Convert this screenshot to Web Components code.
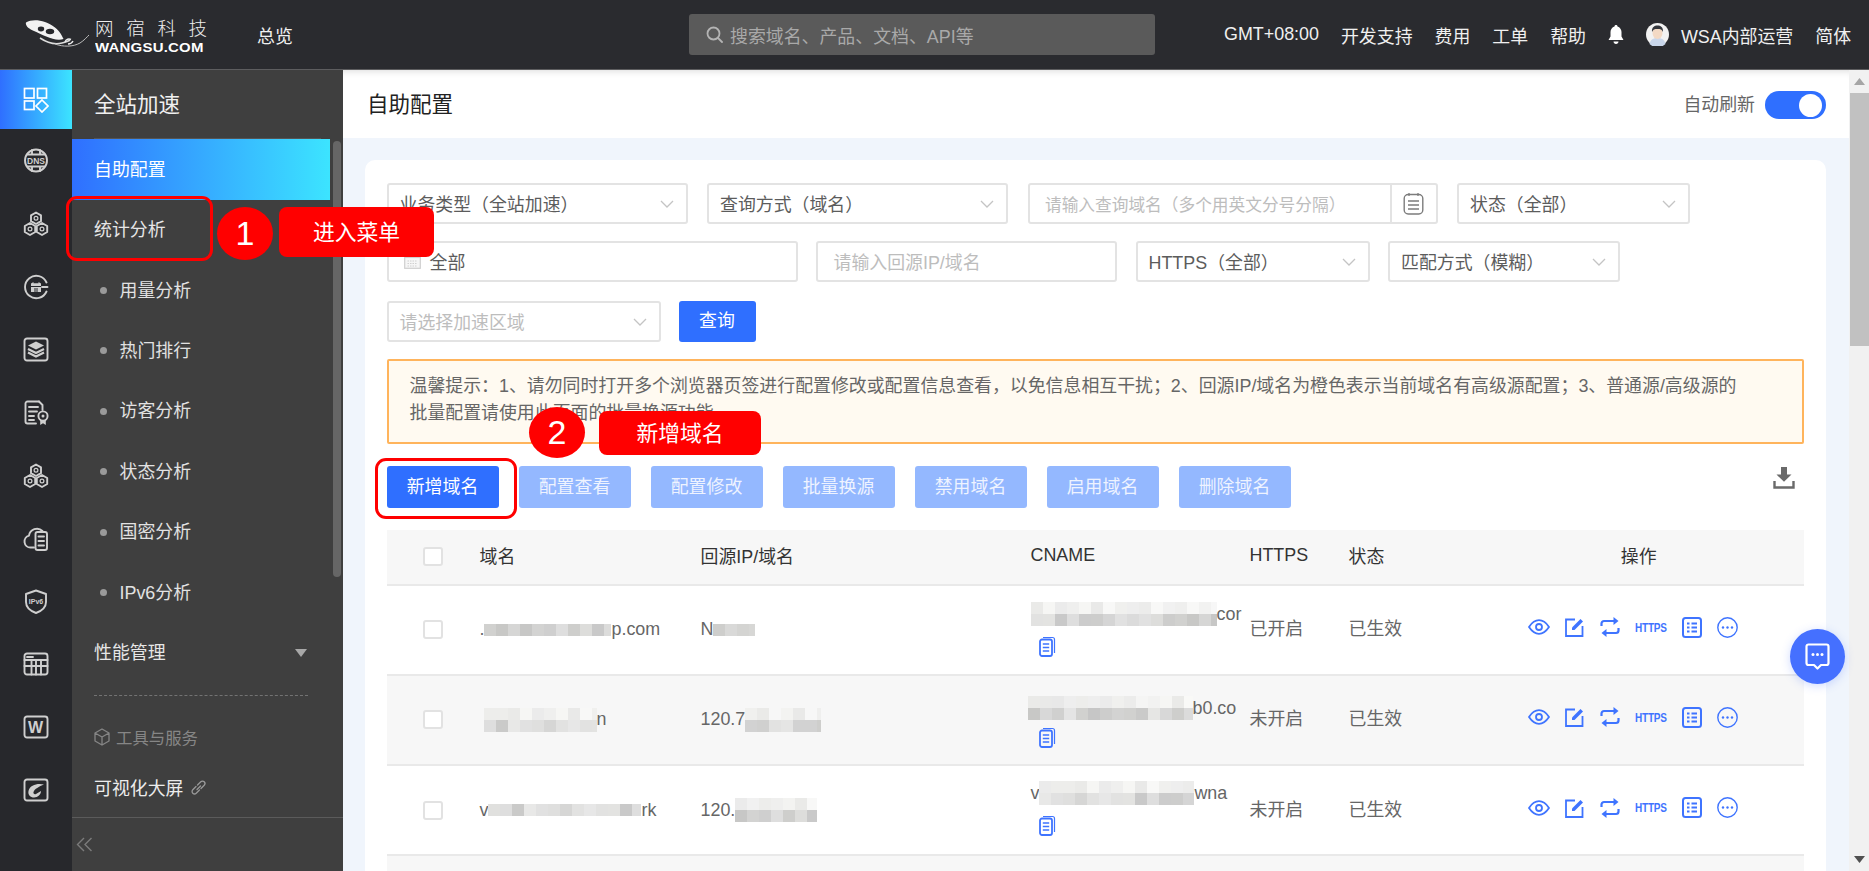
<!DOCTYPE html>
<html lang="zh-CN">
<head>
<meta charset="utf-8">
<title>自助配置</title>
<style>
html,body{margin:0;padding:0;height:100%;overflow:hidden;background:#fff}
body{font-family:"Liberation Sans","Noto Sans CJK SC",sans-serif;color:#555}
</style>
</head>
<body>
<ws-app></ws-app>
<script>
function reg(name, css, html, init){
  customElements.define(name, class extends HTMLElement{
    constructor(){
      super();
      const r = this.attachShadow({mode:'open'});
      r.innerHTML = `<style>${css}</style>` + (typeof html === 'function' ? html(this) : html);
      if(init) init(this, r);
    }
  });
}
const svg = (w,h,vb,body,extra='') => `<svg width="${w}" height="${h}" viewBox="${vb}" fill="none" ${extra}>${body}</svg>`;

/* ---------- rail icons ---------- */
const S = 'stroke="currentColor" stroke-width="1.9" stroke-linejoin="round" stroke-linecap="round"';
const hexCluster = `<g ${S} stroke-width="1.9">
  <path d="M13 1.500l5 2.900v5.800L13 13 8 10.200V4.400z"/>
  <path d="M7 12l5.200 3v6L7 24l-5.200-3v-6z"/>
  <path d="M19 12l5.200 3v6L19 24l-5.200-3v-6z"/></g>
  <circle cx="13" cy="7.300" r="1.900" stroke="currentColor" stroke-width="1.200"/><circle cx="7" cy="18" r="1.900" stroke="currentColor" stroke-width="1.200"/><circle cx="19" cy="18" r="1.900" stroke="currentColor" stroke-width="1.200"/>`;
const RAIL = {
  apps:`<g stroke="#fff" stroke-width="1.700"><rect x="1.500" y="1.500" width="9.500" height="9.500"/><rect x="14.500" y="1.500" width="9" height="9.500"/><rect x="1.500" y="14" width="9.500" height="8.500"/><path d="M19 13l6 6-6 6-6-6z"/></g>`,
  dns:`<circle cx="13" cy="12.500" r="11" ${S}/><path d="M5 6.500h16M5 18.500h16M9 2v4.500M17 2v4.500M9 18.500v4.500M17 18.500v4.500" ${S} stroke-width="1.400"/><text x="13" y="15.500" font-size="8.500" font-weight="700" text-anchor="middle" fill="currentColor" font-family="Liberation Sans">DNS</text>`,
  hex:hexCluster,
  edge:`<path d="M23.500 8.500A11.200 11.200 0 1 0 23.500 17.500" ${S}/><path d="M19 13h5.500" ${S}/><path d="M8 9.500l2.500-1.500v1.200h5V8L18 9.500V18H8z" fill="currentColor"/><path d="M8 12.500h10M11 15h4M11 17h4" stroke="#27282c" stroke-width="1.200"/>`,
  layers:`<rect x="1.500" y="1.500" width="23" height="22" rx="2.500" ${S}/><path d="M13 4.500l8 4-8 4-8-4z" fill="currentColor"/><path d="M5 12l8 4 8-4M5 15.500l8 4 8-4" stroke="currentColor" stroke-width="2.200"/>`,
  cert:`<path d="M16 1.500H4.500a2 2 0 0 0-2 2v18a2 2 0 0 0 2 2H13" ${S}/><path d="M16 1.500l3.500 3.500V10" ${S}/><path d="M6 7h9M6 11.500h8M6 16h5M6 20h5" ${S} stroke-width="1.600"/><circle cx="20" cy="16" r="4.600" ${S} stroke-width="1.600"/><circle cx="20" cy="16" r="1.500" fill="currentColor"/><path d="M17.200 20v5l2.800-1.800 2.800 1.800v-5" fill="currentColor"/>`,
  cloud:`<path d="M11 21.500H7.500a6 6 0 0 1-1.500-11.800A8 8 0 0 1 19.500 5" ${S}/><rect x="12.500" y="6" width="11.500" height="18" rx="2" ${S}/><path d="M15.500 10.500h5.500M15.500 15h5.500M15.500 19.500h5.500" ${S} stroke-width="2.200"/>`,
  shield:`<path d="M13 1.500l10 3.500v8c0 5.500-4.500 9-10 11-5.500-2-10-5.500-10-11V5z" ${S}/><text x="13" y="14.500" font-size="7" font-weight="700" text-anchor="middle" fill="currentColor" font-family="Liberation Sans">IPv6</text>`,
  table:`<rect x="1.500" y="1.500" width="23" height="21" rx="2.500" ${S}/><path d="M1.500 8h23M1.500 14h23M8.500 8v14.500M13 8v14.500M18 8v14.500" ${S} stroke-width="1.700"/><path d="M4 5h6" ${S} stroke-width="1.500"/>`,
  w:`<rect x="1.500" y="1.500" width="23" height="21" rx="2.500" ${S}/><text x="12.500" y="18" font-size="16" font-weight="700" text-anchor="middle" fill="currentColor" font-family="Liberation Sans">W</text>`,
  gauge:`<rect x="1.500" y="1.500" width="23" height="21" rx="2.500" ${S}/><path d="M21 6.500C15 5 7 6.500 5.500 13c-.8 4 2 6.500 5.500 6.500 4 0 7-3 7-6.500l-5 3c-1.500.8-3-.3-2.500-2C11.500 11 16 8.500 21 6.500z" fill="currentColor"/>`
};
reg('rail-icon', `:host{display:flex;align-items:center;justify-content:center;height:63.100px;color:#cfcfcf}
  :host([active]){height:59px;background:linear-gradient(90deg,#2f6fff,#3ce4ff)}
  svg{display:block}`,
  h => svg(26,26,'0 0 26 26',RAIL[h.getAttribute('name')]));

reg('icon-rail', `:host{display:block;width:72px;flex:none;background:#27282c}`,
  ['apps','dns','hex','edge','layers','cert','hex','cloud','shield','table','w','gauge']
   .map((k,i)=>`<rail-icon name="${k}" ${i===0?'active':''}></rail-icon>`).join(''));

/* ---------- top bar ---------- */
reg('ws-logo', `:host{display:flex;align-items:center;gap:5px;color:#fff;margin-left:25px;width:232px;flex:none}
  .t{display:flex;flex-direction:column;align-items:flex-start;line-height:1}
  .cn{font:300 18.500px "Noto Sans CJK SC",sans-serif;letter-spacing:12.700px;height:24px;line-height:24px;color:#eee;white-space:nowrap}
  .en{font:700 13px "Liberation Sans",sans-serif;letter-spacing:.2px;margin-top:1px;transform:scaleX(1.150);transform-origin:left;white-space:nowrap}`,
  svg(65,32,'0 0 65 32',`<path d="M1 3.500C8 -.5 20 1 30 8.500c5 3.800 7 8.500 8.500 11.500C30 23 18 16 9 12 4 10 0 6.500 1 3.500z" fill="#f2f2f2"/>
   <ellipse cx="16" cy="10" rx="3.200" ry="2.400" fill="#27282c"/><ellipse cx="25" cy="12.500" rx="4.200" ry="2.700" fill="#27282c"/>
   <path d="M15 19c6 4 14 7 22 5 6-1.500 8-3 8-3" stroke="#ddd" stroke-width="1.600"/><path d="M30 25c8 3 18 3 25-1 4-2.500 7-6 9-8" stroke="#bbb" stroke-width="1"/>
   <path d="M40 23c1-3 4-3.500 6-2.500M43 25c2 0 4-1 5-3" stroke="#eee" stroke-width="1.400"/>`) +
  `<div class="t"><span class="cn">网宿科技</span><span class="en">WANGSU.COM</span></div>`);

reg('top-search', `:host{display:flex;align-items:center;width:466px;height:41px;background:#5a5a5a;border-radius:3px;flex:none;color:#a9a9a9;font-size:17.900px;box-sizing:border-box;padding-left:17px;gap:7px}
  svg{display:block}`,
  svg(17,17,'0 0 17 17',`<circle cx="7.500" cy="7.500" r="6" stroke="#b4b4b4" stroke-width="1.800"/><path d="M12 12l4 4" stroke="#b4b4b4" stroke-width="1.800" stroke-linecap="round"/>`)+`<span>搜索域名、产品、文档、API等</span>`);

reg('top-bar', `:host{display:flex;align-items:center;height:69px;background:#2a2b2f;border-bottom:1px solid #5d5d5f;color:#f0f0f0;font-size:17.900px;white-space:nowrap;box-sizing:content-box}
  .nav{width:432px;flex:none}
  .r{display:flex;align-items:center;margin-left:69px;gap:22px}
  .u{display:flex;align-items:center;gap:12px}
  svg{display:block}`,
  `<ws-logo></ws-logo><div class="nav">总览</div><top-search></top-search>
   <div class="r"><span>GMT+08:00</span><span>开发支持</span><span>费用</span><span>工单</span><span>帮助</span>
   ${svg(16,21,'0 0 16 21',`<path d="M8 1c.9 0 1.500.6 1.500 1.400C12 3.200 13.500 5.400 13.500 8v4.500L15.500 16H.5l2-3.500V8C2.500 5.400 4 3.200 6.500 2.400 6.500 1.600 7.100 1 8 1z" fill="#fff"/><path d="M5.500 17.500h5c0 1.500-1.100 2.500-2.500 2.500s-2.500-1-2.500-2.500z" fill="#fff"/>`)}
   <span class="u">${svg(23,23,'0 0 23 23',`<circle cx="11.500" cy="11.500" r="11.500" fill="#f2f2f2"/><path d="M3.500 21c1-4.500 4-6 8-6s7 1.500 8 6a11.500 11.500 0 0 1-16 0z" fill="#c9d6ea"/><ellipse cx="11.500" cy="10" rx="5" ry="6" fill="#f3d9c4"/><path d="M6 9c-.5-5 2.500-6.500 5.500-6.500S17.500 4 17 9c-1-2.500-2.500-3-5.500-3S7 6.500 6 9z" fill="#33363c"/>`)}<span>WSA内部运营</span></span>
   <span>简体</span></div>`);

/* ---------- side menu ---------- */
reg('menu-item', `:host{display:flex;align-items:center;height:60.400px;padding:0 0 4px 22px;color:#e6e6e6;font-size:17.900px;box-sizing:border-box;white-space:nowrap;position:relative}
  :host([active]){height:61px;width:258px;color:#fff;background:linear-gradient(90deg,#2f6fff,#3ce4ff)}
  :host([sub]){padding-left:28px;color:#e2e2e2}
  :host([sub])::before{content:"";width:7px;height:7px;border-radius:50%;background:#9a9a9a;margin-right:12.500px;margin-top:4px;flex:none}
  .tri{position:absolute;left:223px;top:26px;width:0;height:0;border:6.500px solid transparent;border-top:8px solid #a8a8a8;border-bottom:0}`,
  h=>`<slot></slot>${h.hasAttribute('tri')?'<span class="tri"></span>':''}`);

reg('side-menu', `:host{display:flex;flex-direction:column;position:relative;width:271px;flex:none;background:#3f3f3f;color:#eee;overflow:hidden}
  .title{height:68px;padding:0 0 4px 22px;display:flex;align-items:center;font-size:21.500px;box-sizing:border-box;color:#f0f0f0;flex:none}
  .hr{height:1px;margin:0 22px;width:227px;background:#555;flex:none}
  .dash{height:0;border-top:1px dashed #737373;margin:12px 35px 0 22px;flex:none}
  .tool{display:flex;align-items:center;gap:6px;padding-left:22px;margin-top:29px;height:24px;color:#868686;font-size:16.400px;flex:none}
  .vis{display:flex;align-items:center;gap:7px;padding-left:22px;margin-top:24px;height:28px;font-size:17.900px;color:#ececec;flex:none}
  .foot{margin-top:auto;height:54px;border-top:1px solid #5b5b5b;box-sizing:border-box;display:flex;align-items:center;padding-left:4px;flex:none}
  .bar{position:absolute;left:261px;top:71px;width:8px;height:436px;background:#666;border-radius:4px}
  svg{display:block}`,
  `<div class="title">全站加速</div><div class="hr"></div>
   <menu-item active>自助配置</menu-item>
   <menu-item>统计分析</menu-item>
   <menu-item sub>用量分析</menu-item><menu-item sub>热门排行</menu-item><menu-item sub>访客分析</menu-item><menu-item sub>状态分析</menu-item><menu-item sub>国密分析</menu-item><menu-item sub>IPv6分析</menu-item>
   <menu-item tri>性能管理</menu-item>
   <div class="dash"></div>
   <div class="tool">${svg(16,18,'0 0 16 18',`<path d="M8 1l7 4v8l-7 4-7-4V5zM1 5l7 4 7-4M8 9v8" stroke="#868686" stroke-width="1.300" stroke-linejoin="round"/>`)}<span>工具与服务</span></div>
   <div class="vis"><span>可视化大屏</span>${svg(17,17,'0 0 17 17',`<path d="M7 10.500l3.500-3.500M6 7.500L2.800 10.800a2.400 2.400 0 0 0 3.400 3.400L9.500 11M7.500 6l3.300-3.200a2.400 2.400 0 0 1 3.400 3.400L11 9.500" stroke="#999" stroke-width="1.300" stroke-linecap="round"/>`)}</div>
   <div class="foot">${svg(17,15,'0 0 17 15',`<path d="M8 1L1.500 7.500 8 14M15.500 1L9 7.500l6.500 6.500" stroke="#7b7b7b" stroke-width="1.400"/>`)}</div>
   <div class="bar"></div>`);

/* ---------- form controls ---------- */
reg('ws-select', `:host{display:flex;align-items:center;justify-content:space-between;box-sizing:border-box;height:41px;border:2px solid #e3e3e3;border-radius:3px;padding:0 12px 2px 11px;font-size:17.900px;color:#5c5c5c;background:#fff;white-space:nowrap;flex:none}
  :host([ph]){color:#bdbdbd}
  svg{display:block;margin-top:2px}`,
  `<span><slot></slot></span>`+svg(14,8,'0 0 14 8',`<path d="M1 1l6 6 6-6" stroke="#c4c4c4" stroke-width="1.300"/>`));

reg('ws-input', `:host{display:flex;align-items:center;box-sizing:border-box;height:41px;border:2px solid #e3e3e3;border-radius:3px;padding:0 0 2px 15.500px;font-size:17.900px;color:#bdbdbd;background:#fff;white-space:nowrap;flex:none;overflow:hidden}
  :host([addon]){font-size:16.700px;padding-bottom:0}
  :host([date]){padding-left:15px;color:#5c5c5c;gap:9px}
  .add{margin-left:auto;width:44px;height:100%;border-left:2px solid #e3e3e3;display:flex;align-items:center;justify-content:center;flex:none}
  svg{display:block}`,
  h=>`${h.hasAttribute('date')?svg(17,16,'0 0 17 16',`<rect x=".7" y=".7" width="15.600" height="14.600" stroke="#cfcfcf" stroke-width="1.200" fill="#f6f6f6"/><path d="M.7 4.500h15.600" stroke="#cfcfcf" stroke-width="1.200"/><path d="M3.500 8h10M3.500 10.500h10M3.500 13h10" stroke="#d0d0d0" stroke-width="1" stroke-dasharray="1.500 1"/>`):''}<span><slot></slot></span>
   ${h.hasAttribute('addon')?`<span class="add">${svg(21,23,'0 0 21 23',`<rect x="1.200" y="2.500" width="18.600" height="19.500" rx="4" stroke="#7c7c7c" stroke-width="1.400"/><path d="M5 9h11M5 13h11M5 17h11M6 1v3M15 1v3" stroke="#7c7c7c" stroke-width="1.300"/>`)}</span>`:''}`);

reg('ws-button', `:host{display:flex;align-items:center;justify-content:center;box-sizing:border-box;width:112px;height:42px;padding-bottom:4px;border-radius:3px;background:#2f6fff;color:#fff;font-size:17.900px;white-space:nowrap;flex:none}
  :host([off]){background:#94b8ff;color:#eef3ff}
  :host([small]){width:77px;height:41px;padding-bottom:5px}`,`<slot></slot>`);

reg('filter-bar', `:host{display:block}
  .row{display:flex}
  .r1{gap:19.500px}.r2{gap:18.500px;margin-top:17px}.r3{gap:18px;margin-top:19px}`,
  `<div class="row r1"><ws-select style="width:301px">业务类型（全站加速）</ws-select><ws-select style="width:301px">查询方式（域名）</ws-select><ws-input addon style="width:410px">请输入查询域名（多个用英文分号分隔）</ws-input><ws-select style="width:233px">状态（全部）</ws-select></div>
   <div class="row r2"><ws-input date style="width:411px">全部</ws-input><ws-input style="width:301px">请输入回源IP/域名</ws-input><ws-select style="width:234px">HTTPS（全部）</ws-select><ws-select style="width:232px">匹配方式（模糊）</ws-select></div>
   <div class="row r3"><ws-select ph style="width:274px">请选择加速区域</ws-select><ws-button small>查询</ws-button></div>`);

reg('tip-notice', `:host{display:block;box-sizing:border-box;margin-top:17px;height:85px;padding:11.500px 21px 0;border:2px solid #ffb45c;border-radius:2px;background:#fffaf1;font-size:17.900px;line-height:27px;color:#666;white-space:nowrap}`,`<slot></slot>`);

reg('action-bar', `:host{display:flex;align-items:flex-start;gap:20px;margin-top:22px}
  .dl{margin-left:auto;margin-right:9px;margin-top:1px;display:block}`,
  `<ws-button>新增域名</ws-button>`+['配置查看','配置修改','批量换源','禁用域名','启用域名','删除域名'].map(t=>`<ws-button off>${t}</ws-button>`).join('')+
  svg(22,22,'0 0 22 22',`<path d="M8 0h6v8h4.500L11 15.500 3.500 8H8z" fill="#6a6a6a" transform="scale(1 .95)"/><path d="M1.500 14v6.500h19V14" stroke="#6a6a6a" stroke-width="2.400"/>`,'class="dl"'));

/* ---------- blur patch ---------- */
reg('blur-patch', `:host{display:grid;grid-auto-rows:12px;flex:none;overflow:hidden}
  i{display:block;width:12px;height:12px}`,
  h=>{
    const w=+h.getAttribute('w'), r=+(h.getAttribute('r')||1);
    let seed=+(h.getAttribute('s')||3), cells='';
    const c=Math.ceil(w/12);
    for(let y=0;y<r;y++)for(let x=0;x<c;x++){
      seed=(seed*73+41)%101;
      const faint=(r>1&&y===0);
      const v=faint?232+seed%18:(198+seed%36);
      cells+=`<i style="background:rgb(${v},${v},${v-(seed%3)})"></i>`;
    }
    return cells;
  },
  h=>{const r=+(h.getAttribute('r')||1),c=Math.ceil(+h.getAttribute('w')/12);
      h.style.width=h.getAttribute('w')+'px';h.style.height=(12*r)+'px';h.style.gridTemplateColumns=`repeat(${c},12px)`;});

/* ---------- table ---------- */
const B='#3f74ff';
const OPS = `
  ${svg(22,16,'0 0 22 16',`<path d="M1 8C4 3.500 7.500 1.200 11 1.200S18 3.500 21 8c-3 4.500-6.500 6.800-10 6.800S4 12.500 1 8z" stroke="${B}" stroke-width="1.800"/><circle cx="11" cy="8" r="3" stroke="${B}" stroke-width="1.800"/>`)}
  ${svg(19,20,'0 0 19 20',`<path d="M10 2.500H1v16.500h16.500V9" stroke="${B}" stroke-width="1.800"/><path d="M7 10.500l8.500-8.500 2.500 2.500L9.500 13H7z" fill="${B}"/>`)}
  ${svg(20,22,'0 0 20 22',`<path d="M1.500 10V7.500A2.500 2.500 0 0 1 4 5h13M18.500 12v2.500a2.500 2.500 0 0 1-2.500 2.500H3" stroke="${B}" stroke-width="2.200"/><path d="M13.500 1l5 4-5 4zM6.500 13l-5 4 5 4z" fill="${B}"/>`)}
  <span class="h">HTTPS</span>
  ${svg(20,21,'0 0 20 21',`<rect x="1" y="1" width="18" height="19" rx="2.500" stroke="${B}" stroke-width="2"/><path d="M5 6.500h2.500M5 10.500h2.500M5 14.500h2.500M9.500 6.500h5.500M9.500 10.500h5.500M9.500 14.500h5.500" stroke="${B}" stroke-width="2.200"/>`)}
  ${svg(21,21,'0 0 21 21',`<circle cx="10.500" cy="10.500" r="9.700" stroke="${B}" stroke-width="1.400"/><circle cx="6" cy="10.500" r="1.200" fill="${B}"/><circle cx="10.500" cy="10.500" r="1.200" fill="${B}"/><circle cx="15" cy="10.500" r="1.200" fill="${B}"/>`)}`;
reg('op-icons', `:host{display:flex;align-items:center;gap:15.500px}
  svg{display:block;flex:none}
  .h{font:700 10px "Liberation Sans",sans-serif;color:${B};letter-spacing:-.2px;transform:scaleY(1.200);width:31px;white-space:nowrap}`,OPS);

reg('copy-icon', `:host{display:block;width:17px;height:21px;flex:none}svg{display:block}`,
  svg(17,21,'0 0 17 21',`<path d="M4 1.500h9.500a2 2 0 0 1 2 2V17" stroke="${B}" stroke-width="1.200"/><rect x="1" y="3.500" width="12" height="16.500" rx="2" stroke="${B}" stroke-width="1.800"/><path d="M3.800 8h6.400M3.800 11.500h6.400M3.800 15h6.400" stroke="${B}" stroke-width="1.300"/>`));

reg('ws-check', `:host{display:block;width:20px;height:19px;box-sizing:border-box;background:#fff;border:2px solid #e2e2e2;border-radius:3px}`,``);

reg('table-row', `:host{display:grid;grid-template-columns:93px 221px 330px 219px 99px 179px 1fr;box-sizing:border-box;border-bottom:2px solid #e9e9e9;background:#fff;height:90.300px;align-items:center;white-space:nowrap}
  :host([even]){background:#f7f7f7}
  :host([head]){height:56px;background:#f7f7f7}
  .ck{padding-left:36.500px}
  .ops{display:flex;margin-top:-5px}`,
  `<div class="ck"><ws-check></ws-check></div><slot name="a"></slot><slot name="b"></slot><slot name="c"></slot><slot name="d"></slot><slot name="e"></slot><slot name="f"><div class="ops"><op-icons></op-icons></div></slot>`);

reg('table-text', `:host{display:flex;align-items:center;white-space:nowrap;color:#333;font-size:17.900px;padding-bottom:3px}
  :host([body]){color:#666;padding-bottom:0}
  :host([cn]){padding-bottom:5px}
  :host([center]){justify-content:center;padding-right:54px}`,`<slot></slot>`);

reg('cname-cell', `:host{display:flex;flex-direction:column;align-items:flex-start;align-self:start;color:#666;font-size:17.900px;padding-top:var(--top,16px)}
  .l{display:flex;align-items:flex-end;white-space:nowrap;height:24px;line-height:24px;margin-left:var(--off,0)}
  copy-icon{margin:var(--gap,10px) 0 0 8px}`,
  `<div class="l"><slot></slot></div><copy-icon></copy-icon>`);

reg('domain-table', `:host{display:block;margin-top:21.500px}`,`<slot></slot>`);

/* ---------- scrollbar, header, page ---------- */
reg('fake-scrollbar', `:host{display:flex;flex-direction:column;width:20px;flex:none;background:#f1f1f1;align-items:center}
  .a{height:23px;display:flex;align-items:center;justify-content:center;flex:none}
  .th{width:19px;height:253px;background:#c1c1c1;flex:none}
  .sp{flex:1}`,
  `<div class="a">${svg(11,7,'0 0 11 7',`<path d="M5.500 0L11 7H0z" fill="#a5a5a5"/>`)}</div><div class="th"></div><div class="sp"></div><div class="a">${svg(11,7,'0 0 11 7',`<path d="M5.500 7L11 0H0z" fill="#505050"/>`)}</div>`);

reg('page-head', `:host{display:flex;align-items:center;height:68px;background:#fff;padding:0 23px 0 24px;box-shadow:inset 0 8px 8px -8px rgba(0,0,0,.18);flex:none}
  .t{font-size:21.500px;color:#222;padding-bottom:4px}
  .s{margin-left:auto;font-size:17.900px;color:#666;margin-right:10px;padding-bottom:2px}
  .sw{width:61px;height:28px;border-radius:14px;background:#2f6fff;display:flex;justify-content:flex-end;align-items:center;padding:0 4px;box-sizing:border-box;margin-top:2px}
  .k{width:23px;height:23px;border-radius:50%;background:#fff}`,
  `<div class="t">自助配置</div><div class="s">自动刷新</div><div class="sw"><div class="k"></div></div>`);

reg('chat-fab', `:host{position:absolute;left:1790px;top:629px;width:55px;height:55px;border-radius:50%;background:#4570ff;box-shadow:0 2px 10px rgba(69,112,255,.25);display:flex;align-items:center;justify-content:center}
  svg{display:block}`,
  svg(25,27,'0 0 25 27',`<path d="M3.500 1.500h18a2 2 0 0 1 2 2V20a2 2 0 0 1-2 2H16l-3.500 3.500L9 22H3.500a2 2 0 0 1-2-2V3.500a2 2 0 0 1 2-2z" stroke="#fff" stroke-width="2.200" stroke-linejoin="round"/><circle cx="8" cy="11.500" r="1.500" fill="#fff"/><circle cx="12.500" cy="11.500" r="1.500" fill="#fff"/><circle cx="17" cy="11.500" r="1.500" fill="#fff"/>`));

/* ---------- callouts ---------- */
reg('red-frame', `:host{position:absolute;box-sizing:border-box;border:3px solid #f00;border-radius:11px}`,``);
reg('step-badge', `:host{position:absolute;display:flex;align-items:center;justify-content:center;background:#f00;border-radius:50%;color:#fff;font:400 34px "Liberation Sans",sans-serif}`,`<slot></slot>`);
reg('step-label', `:host{position:absolute;display:flex;align-items:center;justify-content:center;box-sizing:border-box;padding-bottom:3px;background:#f00;border-radius:8px;color:#fff;font-size:21.800px;white-space:nowrap}`,`<slot></slot>`);

function rowHtml(i){
  const D=[
    {a:`.<blur-patch w="127" s="7"></blur-patch>p.com`, b:`N<blur-patch w="42" s="12"></blur-patch>`,
     c:`<blur-patch w="186" r="2" s="5"></blur-patch><span>cor</span>`, d:'已开启', top:'16px', gap:'10px', off:'0'},
    {a:`<span style="width:4px"></span><blur-patch w="113" r="2" s="21"></blur-patch>n`, b:`120.7<blur-patch w="76" r="2" s="33"></blur-patch>`,
     c:`<blur-patch w="165" r="2" s="9"></blur-patch><span>b0.co</span>`, d:'未开启', top:'20px', gap:'7px', off:'-3px'},
    {a:`v<blur-patch w="153" s="16"></blur-patch>rk`, b:`120.<blur-patch w="82" r="2" s="27"></blur-patch>`,
     c:`<span>v</span><blur-patch w="155" r="2" s="44"></blur-patch><span>wna</span>`, d:'未开启', top:'15px', gap:'10px', off:'0'}
  ][i];
  return `<table-row ${i%2?'even':''}>
    <table-text body slot="a">${D.a}</table-text><table-text body slot="b">${D.b}</table-text>
    <cname-cell slot="c" style="--top:${D.top};--gap:${D.gap};--off:${D.off}">${D.c}</cname-cell>
    <table-text body cn slot="d">${D.d}</table-text>
    <table-text body cn slot="e">已生效</table-text>
  </table-row>`;
}

reg('page-wrap', `:host{display:flex;flex-direction:column;flex:1;min-width:0;background:#f0f5fc;overflow:hidden}
  .card{flex:none;margin:22px 23px 0 22px;background:#fff;border-radius:10px 10px 0 0;padding:23px 22px 0 21.500px;height:711px;box-sizing:border-box;overflow:hidden}`,
  `<page-head></page-head>
   <div class="card"><filter-bar></filter-bar>
   <tip-notice>温馨提示：1、请勿同时打开多个浏览器页签进行配置修改或配置信息查看，以免信息相互干扰；2、回源IP/域名为橙色表示当前域名有高级源配置；3、普通源/高级源的<br>批量配置请使用此页面的批量换源功能</tip-notice>
   <action-bar></action-bar>
   <domain-table>
     <table-row head>
       <table-text slot="a">域名</table-text><table-text slot="b">回源IP/域名</table-text><table-text slot="c">CNAME</table-text><table-text slot="d">HTTPS</table-text><table-text slot="e">状态</table-text><table-text slot="f" center>操作</table-text>
     </table-row>
     ${rowHtml(0)}${rowHtml(1)}${rowHtml(2)}
     <table-row even></table-row>
   </domain-table></div>`);

reg('ws-app', `:host{display:block;position:relative;width:1869px;height:871px;overflow:hidden}
  .body{display:flex;height:801px}`,
  `<top-bar></top-bar>
   <div class="body"><icon-rail></icon-rail><side-menu></side-menu><page-wrap></page-wrap><fake-scrollbar></fake-scrollbar></div>
   <chat-fab></chat-fab>
   <red-frame style="left:66px;top:196px;width:147px;height:65px"></red-frame>
   <step-badge style="left:217px;top:207px;width:56px;height:53px">1</step-badge>
   <step-label style="left:279px;top:207px;width:155px;height:50px">进入菜单</step-label>
   <red-frame style="left:375px;top:458px;width:142px;height:61px"></red-frame>
   <step-badge style="left:529px;top:407px;width:56px;height:51px">2</step-badge>
   <step-label style="left:599px;top:411px;width:162px;height:44px">新增域名</step-label>`);
</script>
</body>
</html>
